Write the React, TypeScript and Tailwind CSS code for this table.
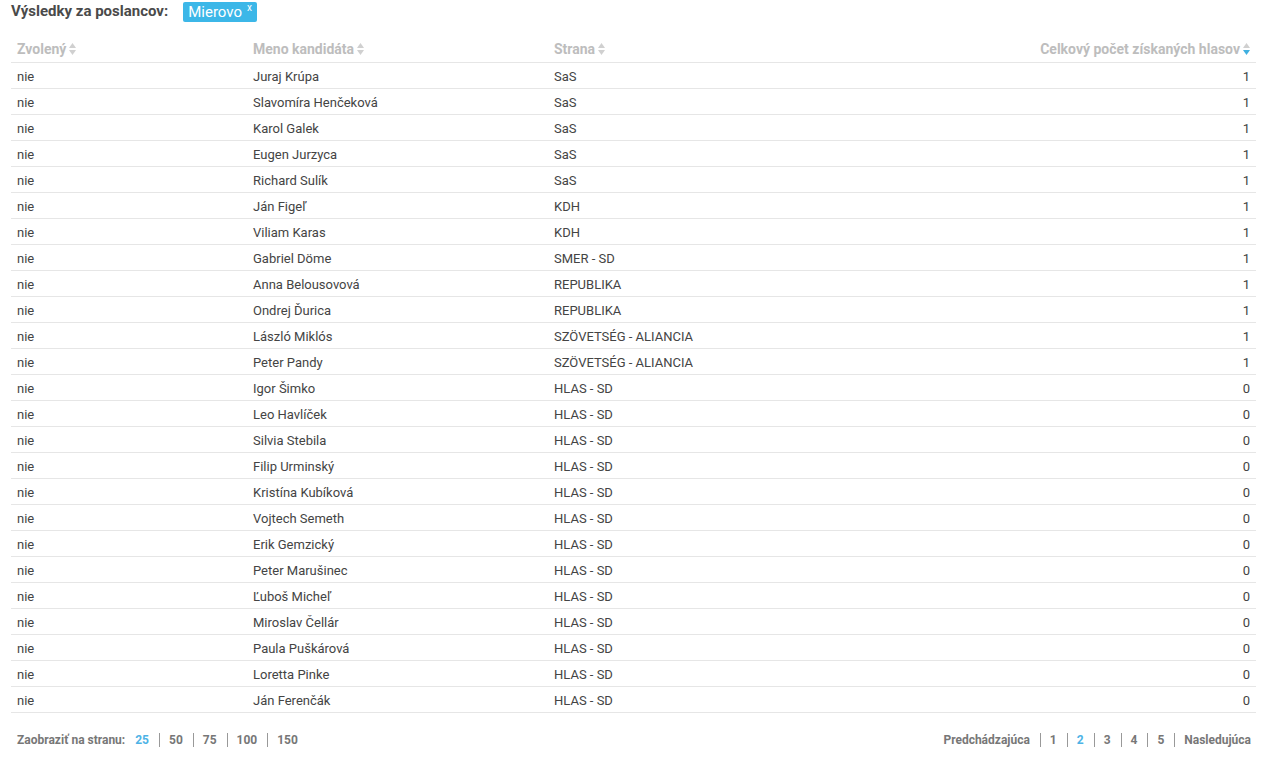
import React from 'react';

const rows: [string, string, string, number][] = [
  ['nie', 'Juraj Krúpa', 'SaS', 1],
  ['nie', 'Slavomíra Henčeková', 'SaS', 1],
  ['nie', 'Karol Galek', 'SaS', 1],
  ['nie', 'Eugen Jurzyca', 'SaS', 1],
  ['nie', 'Richard Sulík', 'SaS', 1],
  ['nie', 'Ján Figeľ', 'KDH', 1],
  ['nie', 'Viliam Karas', 'KDH', 1],
  ['nie', 'Gabriel Döme', 'SMER - SD', 1],
  ['nie', 'Anna Belousovová', 'REPUBLIKA', 1],
  ['nie', 'Ondrej Ďurica', 'REPUBLIKA', 1],
  ['nie', 'László Miklós', 'SZÖVETSÉG - ALIANCIA', 1],
  ['nie', 'Peter Pandy', 'SZÖVETSÉG - ALIANCIA', 1],
  ['nie', 'Igor Šimko', 'HLAS - SD', 0],
  ['nie', 'Leo Havlíček', 'HLAS - SD', 0],
  ['nie', 'Silvia Stebila', 'HLAS - SD', 0],
  ['nie', 'Filip Urminský', 'HLAS - SD', 0],
  ['nie', 'Kristína Kubíková', 'HLAS - SD', 0],
  ['nie', 'Vojtech Semeth', 'HLAS - SD', 0],
  ['nie', 'Erik Gemzický', 'HLAS - SD', 0],
  ['nie', 'Peter Marušinec', 'HLAS - SD', 0],
  ['nie', 'Ľuboš Micheľ', 'HLAS - SD', 0],
  ['nie', 'Miroslav Čellár', 'HLAS - SD', 0],
  ['nie', 'Paula Puškárová', 'HLAS - SD', 0],
  ['nie', 'Loretta Pinke', 'HLAS - SD', 0],
  ['nie', 'Ján Ferenčák', 'HLAS - SD', 0],
];

function SortIcon({ active }: { active?: boolean }) {
  return (
    <svg width="7" height="12" viewBox="0 0 7 12" className="ml-[3px] inline-block align-[-1px]">
      <path d="M3.5 0 L7 5 L0 5 Z" fill="#d0d0d0" />
      <path d="M0 7 L7 7 L3.5 12 Z" fill={active ? '#3fb0e0' : '#d0d0d0'} />
    </svg>
  );
}

function Sep() {
  return <span className="ml-[10px] mr-[9px] inline-block h-[14px] w-px bg-[#999] align-[-2px]" />;
}

export default function App() {
  return (
    <div className="w-[1264px] h-[777px] bg-white text-[#444]" style={{ fontFamily: 'Roboto, "Liberation Sans", sans-serif' }}>
      <div className="flex items-center pl-[11px] pt-[1px] h-[22px]">
        <span className="text-[15px] font-bold text-[#4a4a4a]">Výsledky za poslancov:</span>
        <span className="ml-[15px] flex h-[20px] items-start rounded-[2px] bg-[#3cb7e8] pl-[5px] pr-[5px] text-white">
          <span className="text-[15px] leading-[20px]">Mierovo</span>
          <span className="ml-[5px] text-[10px] leading-[12px]">x</span>
        </span>
      </div>

      <div className="mx-[11px] mt-[14px] w-[1245px]">
        <table className="w-full border-collapse text-[13px]">
          <thead>
            <tr className="h-[26px] border-b border-[#e6e6e6] text-[#bdbdbd] text-[14px] font-bold">
              <th className="w-[236px] px-[6px] pt-[2px] text-left align-middle">Zvolený<SortIcon /></th>
              <th className="w-[301px] px-[6px] pt-[2px] text-left align-middle">Meno kandidáta<SortIcon /></th>
              <th className="px-[6px] pt-[2px] text-left align-middle">Strana<SortIcon /></th>
              <th className="px-[6px] pt-[2px] text-right align-middle">Celkový počet získaných hlasov<SortIcon active /></th>
            </tr>
          </thead>
          <tbody>
            {rows.map((r, i) => (
              <tr key={i} className="h-[26px] border-b border-[#e6e6e6]">
                <td className="px-[6px] pt-[3px]">{r[0]}</td>
                <td className="px-[6px] pt-[3px]">{r[1]}</td>
                <td className="px-[6px] pt-[3px]">{r[2]}</td>
                <td className="px-[6px] pt-[3px] text-right">{r[3]}</td>
              </tr>
            ))}
          </tbody>
        </table>
      </div>

      <div className="mt-[18px] flex items-center justify-between pl-[17px] pr-[13px] text-[12px] font-bold text-[#777]">
        <div className="flex items-center">
          <span>Zaobraziť na stranu:</span>
          <span className="ml-[10px] text-[#4db3e6]">25</span>
          <Sep />
          <span>50</span>
          <Sep />
          <span>75</span>
          <Sep />
          <span>100</span>
          <Sep />
          <span>150</span>
        </div>
        <div className="flex items-center">
          <span>Predchádzajúca</span>
          <Sep />
          <span>1</span>
          <Sep />
          <span className="text-[#4db3e6]">2</span>
          <Sep />
          <span>3</span>
          <Sep />
          <span>4</span>
          <Sep />
          <span>5</span>
          <Sep />
          <span>Nasledujúca</span>
        </div>
      </div>
    </div>
  );
}
